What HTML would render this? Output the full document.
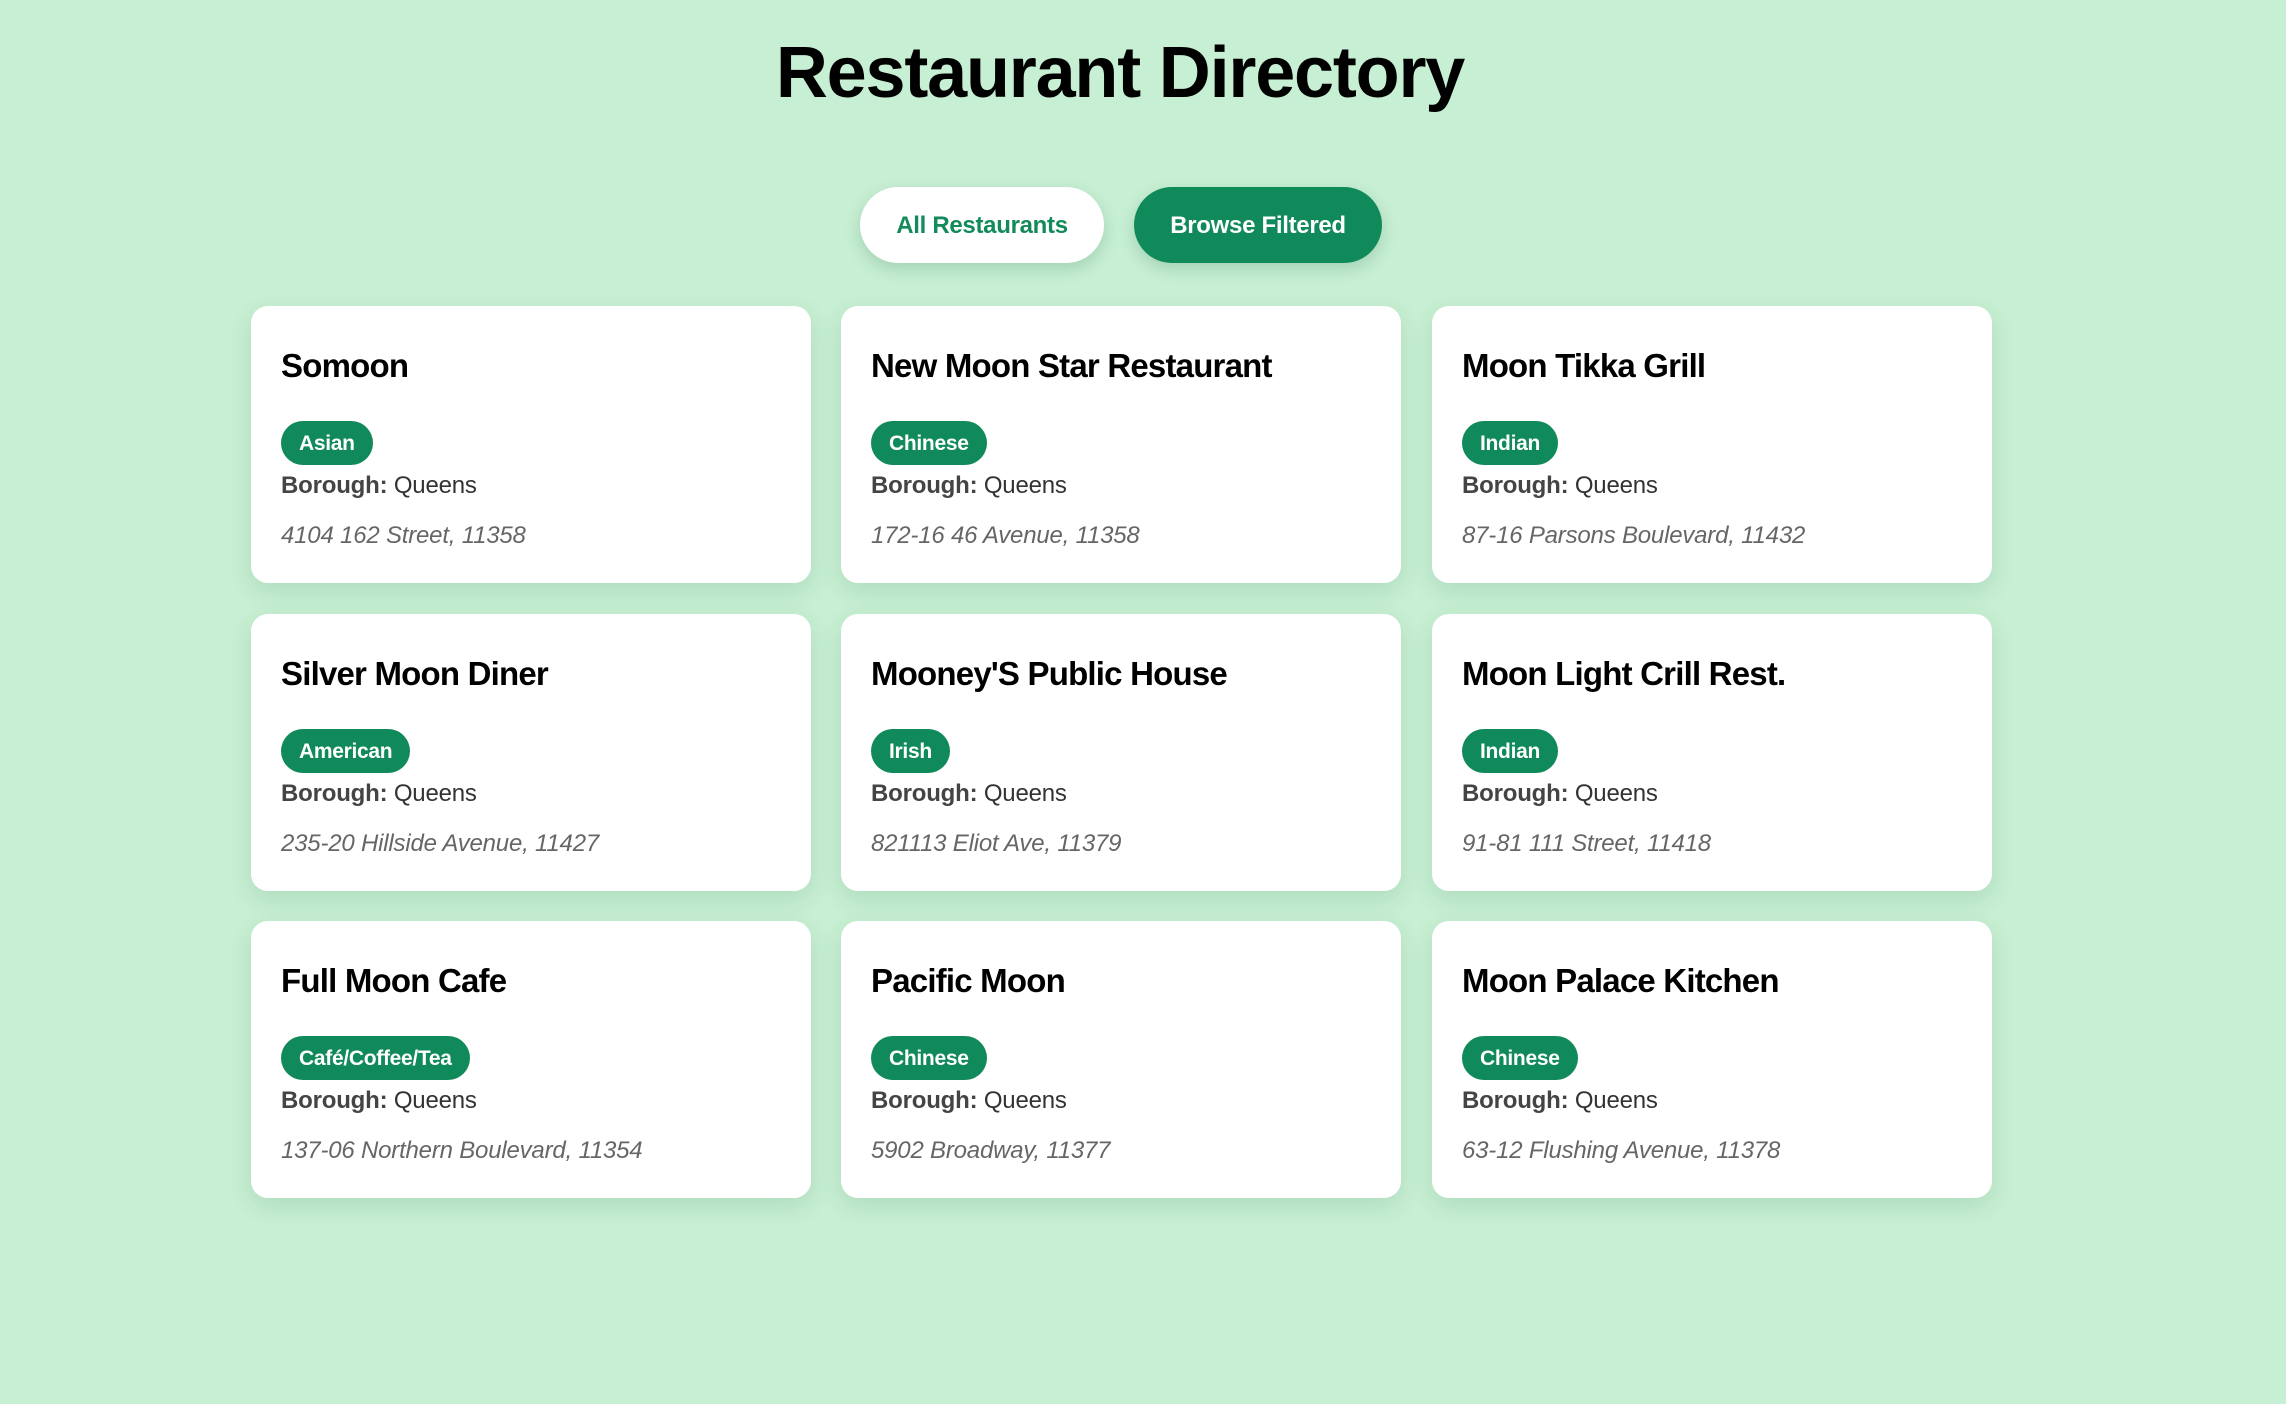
<!DOCTYPE html>
<html><head><meta charset="utf-8"><style>
html,body{margin:0;padding:0;}
body{width:2286px;height:1404px;background:#c7efd3;font-family:"Liberation Sans",Arial,sans-serif;position:relative;overflow:hidden;}
h1{position:absolute;left:0;width:2240px;top:27px;margin:0;text-align:center;font-size:72px;line-height:92px;font-weight:bold;color:#000;letter-spacing:-1.2px;}
.btn{position:absolute;top:187px;height:76px;border-radius:38px;font-size:24px;font-weight:bold;line-height:78px;text-align:center;box-shadow:0 6px 16px rgba(0,80,40,0.18);letter-spacing:-0.3px;}
.b1{left:860px;width:244px;background:#fff;color:#128a5a;}
.b2{left:1134px;width:248px;background:#108a5a;color:#fff;}
.card{position:absolute;width:560px;height:277px;background:#fff;border-radius:17px;box-shadow:0 8px 24px rgba(0,80,40,0.12);}
.card .t{position:absolute;left:30px;top:40px;font-size:33px;line-height:40px;font-weight:bold;color:#000;white-space:nowrap;letter-spacing:-0.8px;}
.card .g{position:absolute;left:30px;top:115px;height:44px;line-height:45px;padding:0 18px;border-radius:22px;background:#108a5a;color:#fff;font-size:21px;font-weight:bold;letter-spacing:-0.3px;}
.card .b{position:absolute;left:30px;top:165px;font-size:24px;line-height:30px;color:#333;letter-spacing:-0.2px;}
.card .b strong{color:#444;}
.card .a{position:absolute;left:30px;top:215px;font-size:24px;line-height:30px;color:#666;font-style:italic;letter-spacing:-0.2px;}
</style></head><body>
<h1>Restaurant Directory</h1>
<div class="btn b1">All Restaurants</div>
<div class="btn b2">Browse Filtered</div>

<div class="card" style="left:251px;top:306px"><div class="t">Somoon</div><div class="g">Asian</div><div class="b"><strong>Borough:</strong> Queens</div><div class="a">4104 162 Street, 11358</div></div>
<div class="card" style="left:841px;top:306px"><div class="t">New Moon Star Restaurant</div><div class="g">Chinese</div><div class="b"><strong>Borough:</strong> Queens</div><div class="a">172-16 46 Avenue, 11358</div></div>
<div class="card" style="left:1432px;top:306px"><div class="t">Moon Tikka Grill</div><div class="g">Indian</div><div class="b"><strong>Borough:</strong> Queens</div><div class="a">87-16 Parsons Boulevard, 11432</div></div>

<div class="card" style="left:251px;top:614px"><div class="t">Silver Moon Diner</div><div class="g">American</div><div class="b"><strong>Borough:</strong> Queens</div><div class="a">235-20 Hillside Avenue, 11427</div></div>
<div class="card" style="left:841px;top:614px"><div class="t">Mooney'S Public House</div><div class="g">Irish</div><div class="b"><strong>Borough:</strong> Queens</div><div class="a">821113 Eliot Ave, 11379</div></div>
<div class="card" style="left:1432px;top:614px"><div class="t">Moon Light Crill Rest.</div><div class="g">Indian</div><div class="b"><strong>Borough:</strong> Queens</div><div class="a">91-81 111 Street, 11418</div></div>

<div class="card" style="left:251px;top:921px"><div class="t">Full Moon Cafe</div><div class="g">Café/Coffee/Tea</div><div class="b"><strong>Borough:</strong> Queens</div><div class="a">137-06 Northern Boulevard, 11354</div></div>
<div class="card" style="left:841px;top:921px"><div class="t">Pacific Moon</div><div class="g">Chinese</div><div class="b"><strong>Borough:</strong> Queens</div><div class="a">5902 Broadway, 11377</div></div>
<div class="card" style="left:1432px;top:921px"><div class="t">Moon Palace Kitchen</div><div class="g">Chinese</div><div class="b"><strong>Borough:</strong> Queens</div><div class="a">63-12 Flushing Avenue, 11378</div></div>
</body></html>
